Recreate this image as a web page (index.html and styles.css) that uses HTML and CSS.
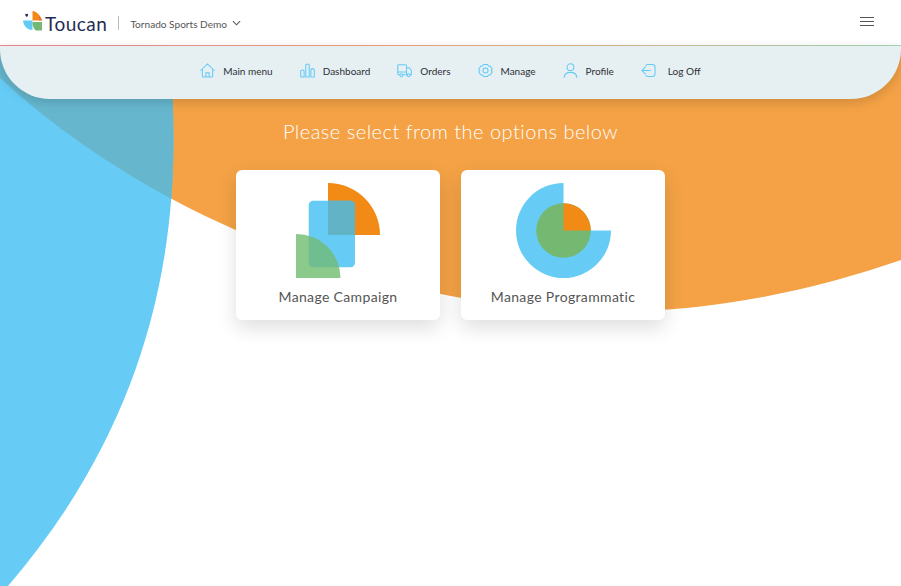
FILE: index.html
```html
<!DOCTYPE html>
<html lang="en">
<head>
<meta charset="utf-8">
<title>Toucan</title>
<link rel="stylesheet" href="styles.css">
</head>
<body>
<svg class="backdrop" viewBox="0 0 901 586" aria-hidden="true">
  <defs>
    <clipPath id="blue-clip"><path d="M170 40 C172 80 173.500 110 173.500 140 C173.500 300 125 450 8 586 L0 596 L0 40 Z"/></clipPath>
  </defs>
  <path class="bg-orange" d="M0 78 C170 235 420 318 640 311 C730 308 820 288 901 260 L901 0 L0 0 Z"/>
  <path class="bg-blue" d="M170 40 C172 80 173.500 110 173.500 140 C173.500 300 125 450 8 586 L0 596 L0 40 Z"/>
  <path class="bg-teal" clip-path="url(#blue-clip)" d="M0 78 C170 235 420 318 640 311 C730 308 820 288 901 260 L901 0 L0 0 Z"/>
</svg>

<header class="topbar">
  <div class="brand">
    <svg class="logo" viewBox="0 0 20 20" aria-hidden="true">
      <path class="logo-orange" d="M9.500 0 C14 0.500 17 4 19 9.500 L9.500 9.500 Z"/>
      <path class="logo-red" d="M16 4.300 Q18 6.800 19 9.500 L16 9.500 Z"/>
      <path class="logo-blue" d="M0 9.500 L9.500 9.500 L9.500 19 C4 19 0.500 14.500 0 9.500 Z"/>
      <path class="logo-green" d="M9.500 11 L19 11 L19 19.500 L13.500 19.500 C11 19 9.500 15 9.500 11 Z"/>
      <path class="logo-dark" d="M2.400 2.500 Q3.700 3.500 5 2.500 Q5.300 5.600 3.700 5.800 Q2.100 5.600 2.400 2.500 Z"/>
    </svg>
    <span class="wordmark">Toucan</span>
    <span class="divider"></span>
    <span class="account">Tornado Sports Demo</span>
    <svg class="chevron" viewBox="0 0 10 6" aria-hidden="true"><path d="M1 1 L5 5 L9 1"/></svg>
  </div>
  <div class="burger" aria-label="Menu"><span></span><span></span><span></span></div>
</header>

<nav class="navpanel">
  <a class="navitem">
    <svg class="navicon" viewBox="0 0 16 16"><path d="M0.800 8 L8 1 L15.200 8 M2.500 6.800 V14 Q2.500 15 3.500 15 H12.500 Q13.500 15 13.500 14 V6.800 M6.300 15 V10.500 H9.700 V15"/></svg>
    <span>Main menu</span>
  </a>
  <a class="navitem">
    <svg class="navicon" viewBox="0 0 16 16"><path d="M0.800 15 V8.500 Q2.600 6.500 4.400 8.500 V15 M6.200 15 V2 Q8 0 9.800 2 V15 M11.600 15 V7 Q13.400 5 15.200 7 V15 M0.800 15 H4.400 M6.200 15 H9.800 M11.600 15 H15.200"/></svg>
    <span>Dashboard</span>
  </a>
  <a class="navitem">
    <svg class="navicon" viewBox="0 0 16 16"><path d="M3 12.500 H2 Q0.800 12.500 0.800 11.300 V3 Q0.800 1.800 2 1.800 H9 Q10.200 1.800 10.200 3 V12.500 H6.500 M10.200 5 H13 L15.300 8 V12.500 H14 M10.500 12.500 H11 M0.800 9.500 H10.200"/><circle cx="4.700" cy="13" r="1.600"/><circle cx="12.500" cy="13" r="1.600"/></svg>
    <span>Orders</span>
  </a>
  <a class="navitem">
    <svg class="navicon" viewBox="0 0 16 16"><path d="M5.800 1.500 H10.200 L11 3.300 L13 3.100 L15.200 6.500 L14 8 L15.200 9.500 L13 12.900 L11 12.700 L10.200 14.500 H5.800 L5 12.700 L3 12.900 L0.800 9.500 L2 8 L0.800 6.500 L3 3.100 L5 3.300 Z" stroke-linejoin="round"/><circle cx="8" cy="8" r="2.700"/></svg>
    <span>Manage</span>
  </a>
  <a class="navitem">
    <svg class="navicon" viewBox="0 0 16 16"><circle cx="8" cy="4.500" r="3.600"/><path d="M1.200 15.500 C1.500 11.500 4.500 10 8 10 C11.500 10 14.500 11.500 14.800 15.500"/></svg>
    <span>Profile</span>
  </a>
  <a class="navitem navitem-last">
    <svg class="navicon" viewBox="0 0 16 16"><path d="M5 3 Q5.500 1.500 7 1.500 H12 Q15 1.500 15 4.500 V11.500 Q15 14.500 12 14.500 H7 Q5.500 14.500 5 13 M10 8 H1 M4.500 4.500 L1 8 L4.500 11.500"/></svg>
    <span>Log Off</span>
  </a>
</nav>

<main class="content">
  <h1 class="prompt">Please select from the options below</h1>
  <div class="cards">
    <a class="card">
      <svg class="cardicon" viewBox="0 0 84 95" aria-hidden="true">
        <defs>
          <clipPath id="rect-clip"><rect x="12.700" y="17.700" width="46.300" height="66.600" rx="4.500"/></clipPath>
        </defs>
        <path class="c-orange" d="M32 0 A52 52 0 0 1 84 52 H32 Z"/>
        <rect class="c-blue" x="12.700" y="17.700" width="46.300" height="66.600" rx="4.500"/>
        <rect class="c-teal" clip-path="url(#rect-clip)" x="32" y="0" width="52" height="52"/>
        <path class="c-lgreen" d="M0 51 A44.500 44.500 0 0 1 44.500 95 H0 Z"/>
        <path class="c-mgreen" clip-path="url(#rect-clip)" d="M0 51 A44.500 44.500 0 0 1 44.500 95 H0 Z"/>
      </svg>
      <span class="cardlabel">Manage Campaign</span>
    </a>
    <a class="card">
      <svg class="cardicon" viewBox="0 0 95 95" aria-hidden="true">
        <path class="c-blue" d="M47.500 0 A47.500 47.500 0 1 0 95 47.500 H47.500 Z"/>
        <circle class="c-green" cx="47.500" cy="47.500" r="27.300"/>
        <path class="c-orange" d="M47.500 20.200 A27.300 27.300 0 0 1 74.800 47.500 H47.500 Z"/>
      </svg>
      <span class="cardlabel">Manage Programmatic</span>
    </a>
  </div>
</main>
</body>
</html>
```

FILE: styles.css
```css
* { box-sizing: border-box; }
html, body { height: 100%; }
body {
  margin: 0;
  position: relative;
  overflow: hidden;
  background: #fff;
  font-family: Lato, "Open Sans", sans-serif;
}
.backdrop {
  position: absolute;
  inset: 0;
  width: 901px;
  height: 586px;
}
.bg-orange { fill: #f4a245; }
.bg-blue { fill: #66ccf6; }
.bg-teal { fill: #66b7ce; }

.topbar {
  position: relative;
  height: 46px;
  background: #fff;
  border-bottom: 1px solid;
  border-image: linear-gradient(90deg, #ee8a94, #f2ab7c 50%, #a5dab8) 1;
  display: flex;
  align-items: center;
  justify-content: space-between;
  padding: 0 27px 0 23px;
}
.brand { display: flex; align-items: center; }
.logo { width: 20px; height: 20px; margin-bottom: 4px; }
.logo-orange { fill: #f28a16; }
.logo-red { fill: #ee6a4a; }
.logo-blue { fill: #63caf5; }
.logo-green { fill: #74b872; }
.logo-dark { fill: #1f2d52; }
.wordmark {
  margin-left: 2px;
  margin-top: 1px;
  font-size: 19px;
  letter-spacing: .5px;
  color: #1f2d52;
}
.divider {
  width: 1px;
  height: 14px;
  margin: 1px 11px 0 11px;
  background: #b9bdc2;
}
.account {
  margin-top: 2px;
  font-size: 10.100px;
  color: #555;
}
.chevron {
  width: 9px;
  height: 6px;
  margin-left: 5px;
  margin-top: 1px;
  fill: none;
  stroke: #555;
  stroke-width: 1.200;
}
.burger { display: flex; flex-direction: column; gap: 3px; width: 14px; margin-bottom: 3px; }
.burger span { height: 1px; background: #555; }

.navpanel {
  position: relative;
  height: 53px;
  background: #e6f0f3;
  border-radius: 0 0 50px 50px;
  box-shadow: 0 3px 12px rgba(0, 0, 0, .16);
  display: flex;
  align-items: center;
  justify-content: center;
  gap: 27px;
  padding-bottom: 4px;
}
.navitem {
  display: flex;
  align-items: center;
  gap: 8px;
  font-size: 10px;
  color: #2c2f33;
}
.navitem-last { gap: 12px; }
.navicon {
  width: 15px;
  height: 15px;
  fill: none;
  stroke: #63caf5;
  stroke-width: 1.100;
  stroke-linecap: round;
}

.content {
  position: relative;
  display: flex;
  flex-direction: column;
  align-items: center;
}
.prompt {
  margin: 19px 0 25px;
  font-size: 20px;
  line-height: 27px;
  font-weight: 300;
  letter-spacing: .5px;
  color: #fff;
}
.cards { display: flex; gap: 21px; }
.card {
  width: 204px;
  height: 150px;
  padding-top: 13px;
  background: #fff;
  border-radius: 6px;
  box-shadow: 0 8px 20px rgba(0, 0, 0, .13);
  display: flex;
  flex-direction: column;
  align-items: center;
}
.cardicon { height: 95px; }
.cardlabel {
  margin-top: 10px;
  font-size: 14px;
  letter-spacing: .35px;
  color: #555;
}
.c-orange { fill: #f28a16; }
.c-blue { fill: #66ccf6; }
.c-teal { fill: #62b3c6; }
.c-lgreen { fill: #8cca8c; }
.c-mgreen { fill: #6fbe90; }
.c-green { fill: #74b872; }
```
